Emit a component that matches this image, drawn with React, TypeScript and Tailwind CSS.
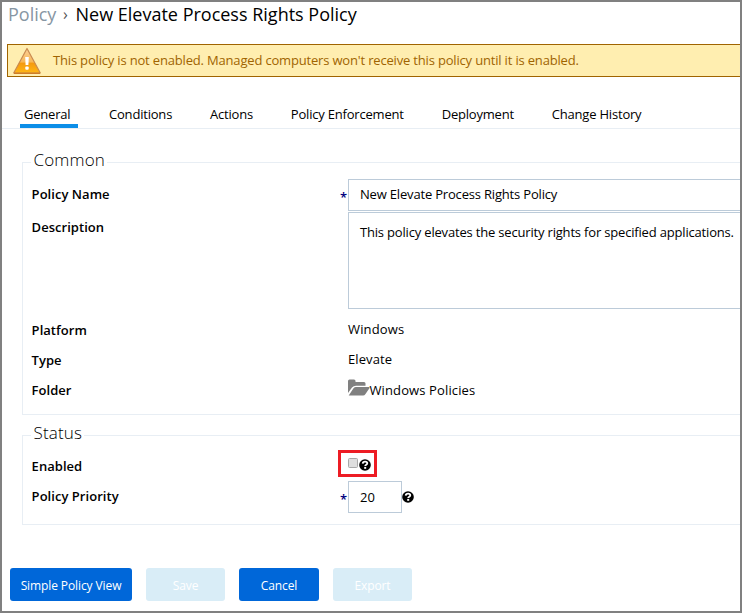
import type { ReactNode } from "react";

const tabs = [
  { name: "General", active: true },
  { name: "Conditions" },
  { name: "Actions" },
  { name: "Policy Enforcement" },
  { name: "Deployment" },
  { name: "Change History" },
];

const buttons = [
  { name: "Simple Policy View", style: "w-[122px] bg-[#0067d9]" },
  { name: "Save", style: "w-[79px] bg-[#d9edf7]" },
  { name: "Cancel", style: "w-[80px] bg-[#0067d9]" },
  { name: "Export", style: "w-[79px] bg-[#d9edf7]" },
];

function WarningIcon() {
  return (
    <svg width="30" height="28" viewBox="0 0 30 28" className="shrink-0">
      <defs>
        <linearGradient id="warn" x1="0" y1="0" x2="0" y2="1">
          <stop offset="0" stopColor="#fbd09a" />
          <stop offset=".55" stopColor="#f8b856" />
          <stop offset=".6" stopColor="#f59a10" />
          <stop offset="1" stopColor="#ffb713" />
        </linearGradient>
      </defs>
      <path d="M15 1.5 28.3 26H1.7Z" fill="url(#warn)" stroke="#c98a50" strokeWidth="1.2" strokeLinejoin="round" />
      <path d="M2 26.3H28" stroke="#c86b10" strokeWidth="1" />
      <path d="M13.2 10h3.6l-.4 8h-2.8Z" fill="#fff" />
      <rect x="13.3" y="19.5" width="3.4" height="3.2" rx="1" fill="#fff" />
    </svg>
  );
}

function HelpIcon() {
  return (
    <svg width="12" height="12" viewBox="0 0 12 12" className="shrink-0">
      <circle cx="6" cy="6" r="5.8" fill="#000" />
      <path d="M3.7 4.6C3.8 3.2 4.800 2.600 6.100 2.600c1.400 0 2.200.7 2.200 1.700 0 1.500-2.100 1.300-2.100 2.800" fill="none" stroke="#fff" strokeWidth="1.800" />
      <rect x="5.200" y="7.900" width="2" height="1.900" fill="#fff" />
    </svg>
  );
}

function FolderIcon() {
  return (
    <svg width="22" height="17" viewBox="0 0 22 17" className="-mt-[5px] shrink-0">
      <path d="M0 14V2Q0 .5 1.500.5H6Q7.500.5 7.500 2V3H16Q17.500 3 17.500 4.500V6.700H8Q5.500 6.700 4 8.500Z" fill="#808080" />
      <path d="M.7 16.500 5.500 9.300Q6.500 8 8 8H21Q22.200 8 21.400 9.200L17.500 15Q16.500 16.500 15 16.500Z" fill="#808080" />
    </svg>
  );
}

function Row({ label, size, required, children }: { label: string; size: string; required?: boolean; children: ReactNode }) {
  return (
    <div className={`flex ${size}`}>
      <div className="w-[308.400px] shrink-0 pt-[5px] leading-5 font-semibold tracking-[0.04px]">{label}</div>
      <div className="w-2 shrink-0 pt-[8px] leading-5 font-semibold text-[#000080]">{required ? "*" : ""}</div>
      <div className="flex min-w-0 flex-1 items-center">{children}</div>
    </div>
  );
}

function Group({ title, size, children }: { title: string; size: string; children: ReactNode }) {
  return (
    <fieldset className={`ml-5 min-w-0 border border-r-0 border-[#e8eef4] pl-[8.600px] ${size}`}>
      <legend className="-ml-px h-[25px] pr-0.5 pl-[3px] text-[17px] leading-[20px] font-light tracking-[0.12px]">{title}</legend>
      {children}
    </fieldset>
  );
}

export default function App() {
  return (
    <div className="h-[613px] w-[742px] overflow-hidden border-2 border-[#808080] bg-white font-['Open_Sans','Noto_Sans',sans-serif] text-[13px] text-black">
      <header className="flex h-[42px] pl-1.5 text-[18px] leading-[25px]">
        <span className="w-[55px] text-[#8796a3]">Policy</span>
        <span className="w-[12.500px] text-[16px] text-[#555]">›</span>
        <h1 className="whitespace-nowrap">New Elevate Process Rights Policy</h1>
      </header>
      <div className="ml-[5px] flex h-[33px] items-center border border-r-0 border-[#a06400] bg-[#ffeeb0] pl-1 text-[#a06400]">
        <WarningIcon />
        <p className="ml-[11px] tracking-[-0.175px] whitespace-nowrap">This policy is not enabled. Managed computers won't receive this policy until it is enabled.</p>
      </div>
      <nav className="mt-[22px] flex h-[30px] gap-[31px] border-b border-[#e8eef4] pl-[18px] tracking-[-0.2px]">
        {tabs.map((t) => (
          <div key={t.name} className={`h-[29px] shrink-0 pt-1.5 leading-[18px] whitespace-nowrap ${t.active ? "w-[58px] border-b-4 border-[#0c8ee8] pl-1" : "mr-[6.900px]"}`}>
            {t.name}
          </div>
        ))}
      </nav>
      <main>
        <Group title="Common" size="mt-[21px] h-[265px]">
          <div className="pt-1">
            <Row label="Policy Name" size="h-8" required>
              <div className="h-8 w-full border border-r-0 border-[#bccbd9] pl-[11px] leading-[28px] tracking-[-0.18px]">New Elevate Process Rights Policy</div>
            </Row>
            <Row label="Description" size="mt-px h-[97px]">
              <div className="h-[97px] w-full border border-r-0 border-[#bccbd9] pt-[9px] pl-[11px] leading-5 tracking-[-0.18px] whitespace-nowrap">This policy elevates the security rights for specified applications.</div>
            </Row>
            <Row label="Platform" size="mt-1.5 h-[30px]"><span className="tracking-[0.15px]">Windows</span></Row>
            <Row label="Type" size="h-[30px]"><span className="tracking-[0.1px]">Elevate</span></Row>
            <Row label="Folder" size="h-[30px]"><FolderIcon /><span className="mt-0.5 -ml-[0.500px] tracking-[0.12px]">Windows Policies</span></Row>
          </div>
        </Group>
        <Group title="Status" size="mt-2 h-[102px]">
          <div className="pt-[3px]">
            <Row label="Enabled" size="h-[30px]">
              <div className="-mt-[6px] -ml-[10px] flex h-[27px] w-[39px] items-center border-[3px] border-[#ed1c24] pl-[7px]">
                <span className="mr-px size-[10px] shrink-0 rounded-[1.500px] border border-[#a8a8a8] bg-[#dedede]" />
                <span className="pt-[3px]"><HelpIcon /></span>
              </div>
            </Row>
            <Row label="Policy Priority" size="h-8" required>
              <div className="h-8 w-[54px] border border-[#bccbd9] pl-[11px] leading-[30px]">20</div>
              <HelpIcon />
            </Row>
          </div>
        </Group>
      </main>
      <footer className="mt-[43px] flex gap-[14px] pl-2">
        {buttons.map((b) => (
          <button key={b.name} className={`h-[33px] rounded-[3px] pt-[3px] text-[12px] tracking-[-0.1px] whitespace-nowrap text-white ${b.style}`}>{b.name}</button>
        ))}
      </footer>
    </div>
  );
}
